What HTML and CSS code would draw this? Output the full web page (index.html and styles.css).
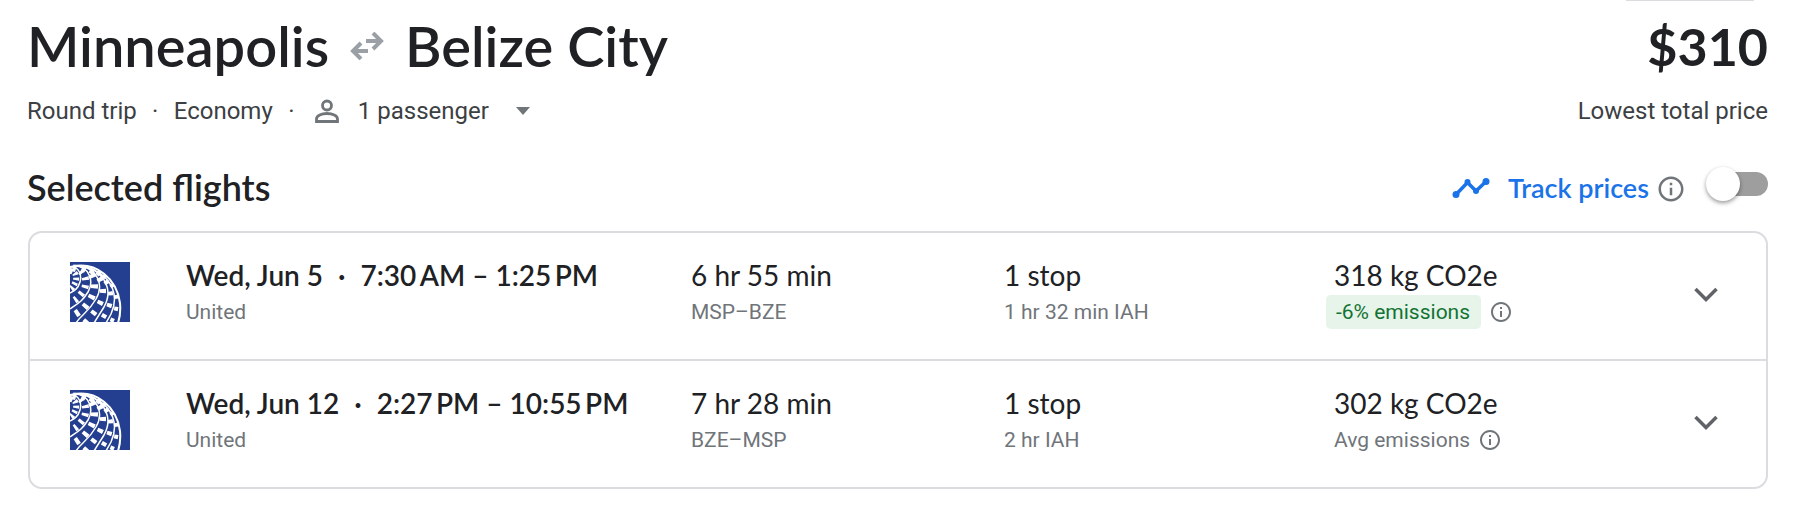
FILE: index.html
```html
<!DOCTYPE html>
<html lang="en">
<head>
<meta charset="utf-8">
<title>Minneapolis to Belize City</title>
<link rel="stylesheet" href="styles.css">
</head>
<body>
<svg class="symbols" aria-hidden="true">
  <symbol id="info" viewBox="0 0 24 24"><path d="M11 7h2v2h-2zm0 4h2v6h-2zm1-9C6.48 2 2 6.48 2 12s4.480 10 10 10 10-4.480 10-10S17.520 2 12 2zm0 18c-4.410 0-8-3.590-8-8s3.590-8 8-8 8 3.590 8 8-3.590 8-8 8z"/></symbol>
  <symbol id="chevron" viewBox="0 0 24 15"><path d="M1.500 2 12 12.500 22.500 2" fill="none" stroke="currentColor" stroke-width="3.500"/></symbol>
  <symbol id="globe" viewBox="0 0 60 60">
    <path fill="#243f8f" d="M0 0h60v60H0z"/>
    <g fill="none" stroke="#fff">
      <path stroke-width="6" stroke-dasharray="2.500 2.500" d="M0 9C7 9 7 17 5 21S2 26 0 27"/>
      <path stroke-width="7" stroke-dasharray="3 5" d="M3 6C18 8 18 24 12 31S4 39 0 40"/>
      <path stroke-width="7" stroke-dasharray="4 7" d="M12 6C27 11 27 27 20 38S8 50 0 56"/>
      <path stroke-width="6" stroke-dasharray="4 8" d="M20 8C36 17 35 33 29 43S19 56 14 62"/>
      <path stroke-width="5" stroke-dasharray="4 8" d="M27 10C43 22 43 38 37 49L30 61"/>
      <path stroke-width="4" stroke-dasharray="4 8" d="M33 13C48 26 49 42 44 54L41 61"/>
      <path stroke-width="1.500" d="M0 5C9 4 12 13 10 20S4 29 0 31M4 4C20 4 24 20 18 30S7 42 0 47M10 4C28 7 34 23 26 37S11 53 6 61M17 5C36 12 43 29 34 45L24 61M24 8C43 17 49 35 41 52L36 61"/>
      <path stroke-width="2" d="M0 5C27-2 47 18 50 41Q51 52 48 61"/>
    </g>
  </symbol>
</svg>
<main class="page">
  <div class="toolbar-edge"></div>
  <header class="trip">
    <div>
      <h1 class="route">Minneapolis
        <svg class="swap" viewBox="0 0 34 28" aria-label="to"><path d="M16 9h15M23 1l8 8-8 8M18 19H3M11 11l-8 8 8 8" fill="none" stroke="currentColor" stroke-width="4"/></svg>
        Belize City</h1>
      <div class="details">
        <span>Round trip</span><span class="dot">·</span><span>Economy</span><span class="dot">·</span>
        <button class="passengers" type="button">
          <svg class="person" viewBox="0 0 24 24"><g fill="none" stroke="currentColor" stroke-width="2.800"><circle cx="12" cy="6.500" r="4.500"/><path d="M1.500 22.500V20c0-3.500 5-5.500 10.500-5.500S22.500 16.500 22.500 20v2.500z"/></g></svg>
          <span>1 passenger</span>
          <svg class="caret" viewBox="0 0 14 8"><path d="M0 0h14L7 8z" fill="currentColor"/></svg>
        </button>
      </div>
    </div>
    <div class="total">
      <div class="price">$310</div>
      <div class="caption">Lowest total price</div>
    </div>
  </header>
  <section>
    <div class="bar">
      <h2 class="heading">Selected flights</h2>
      <div class="track">
        <svg class="trend" viewBox="0 0 38 22"><path d="M4 17.500 15.500 5.500 24 14 34 4.500" fill="none" stroke="currentColor" stroke-width="3.500"/><g fill="currentColor"><circle cx="4" cy="17.500" r="3.500"/><circle cx="15.500" cy="5" r="3"/><circle cx="24" cy="14" r="3"/><circle cx="34" cy="4.500" r="3.500"/></g></svg>
        <label class="track-label" for="track">Track prices</label>
        <button class="info info-large" type="button" aria-label="About price tracking"><svg><use href="#info"/></svg></button>
        <input class="switch" id="track" type="checkbox" role="switch">
      </div>
    </div>
    <ul class="flights">
      <li class="flight">
        <svg class="logo" role="img" aria-label="United"><use href="#globe"/></svg>
        <div><div class="main strong">Wed, Jun 5 <span class="sep">·</span> 7:30&thinsp;AM – 1:25&thinsp;PM</div><div class="sub">United</div></div>
        <div><div class="main">6 hr 55 min</div><div class="sub">MSP–BZE</div></div>
        <div><div class="main">1 stop</div><div class="sub">1 hr 32 min IAH</div></div>
        <div><div class="main">318 kg CO2e</div><div class="sub emissions"><span class="badge">-6% emissions</span><button class="info" type="button" aria-label="About emissions"><svg><use href="#info"/></svg></button></div></div>
        <button class="expand" type="button" aria-label="Flight details"><svg><use href="#chevron"/></svg></button>
      </li>
      <li class="flight">
        <svg class="logo" role="img" aria-label="United"><use href="#globe"/></svg>
        <div><div class="main strong">Wed, Jun 12 <span class="sep">·</span> 2:27&thinsp;PM – 10:55&thinsp;PM</div><div class="sub">United</div></div>
        <div><div class="main">7 hr 28 min</div><div class="sub">BZE–MSP</div></div>
        <div><div class="main">1 stop</div><div class="sub">2 hr IAH</div></div>
        <div><div class="main">302 kg CO2e</div><div class="sub emissions"><span>Avg emissions</span><button class="info" type="button" aria-label="About emissions"><svg><use href="#info"/></svg></button></div></div>
        <button class="expand" type="button" aria-label="Flight details"><svg><use href="#chevron"/></svg></button>
      </li>
    </ul>
  </section>
</main>
</body>
</html>
```
FILE: styles.css
```css
* { box-sizing: border-box; }
body { margin: 0; background: #fff; color: #202124; font-family: Roboto, "Liberation Sans", sans-serif; }
button { border: 0; padding: 0; background: none; color: inherit; font: inherit; cursor: pointer; }
svg { display: block; }
.symbols { position: absolute; width: 0; height: 0; }
.page { padding: 0 26px 0 27px; }

.toolbar-edge { height: 1px; width: 128px; margin: 0 14px 0 auto; background: #dadce0; }

.trip { display: flex; justify-content: space-between; padding-top: 13px; }
.route, .price { margin: 0; font: 600 56px/64px Lato, sans-serif; }
.route { display: flex; align-items: center; gap: 21px; }
.price { font-size: 52px; font-weight: 700; }
.swap { width: 34px; height: 28px; color: #9aa0a6; }
.details { display: flex; align-items: center; margin-top: 17px; }
.details, .caption { font-size: 24px; line-height: 32px; color: #3c4043; }
.dot { width: 37px; text-align: center; }
.passengers { display: flex; align-items: center; margin-left: 5px; }
.person { width: 24px; height: 24px; margin-right: 19px; color: #70757a; }
.caret { width: 14px; height: 8px; margin-left: 27px; color: #70757a; }
.total { text-align: right; }
.caption { margin-top: 17px; }

.bar { display: flex; align-items: center; justify-content: space-between; padding: 40px 0 24px; }
.heading { margin: 0; font: 600 36px/40px Lato, sans-serif; }
.track { display: flex; align-items: center; padding-top: 2px; }
.trend { width: 38px; height: 22px; margin-right: 18px; color: #1a73e8; }
.track-label { font: 600 27px/32px Lato, sans-serif; color: #1a73e8; }
.info { width: 24px; height: 24px; color: #70757a; }
.info svg { width: 100%; height: 100%; fill: currentColor; }
.info-large { width: 30px; height: 30px; margin: 2px 22px 0 7px; }
.switch {
  appearance: none; display: flex; align-items: center;
  width: 60px; height: 24px; margin: 0 0 8px; border-radius: 12px; background: #9e9e9e;
}
.switch::before {
  content: ""; width: 34px; height: 34px; margin-left: -2px; border-radius: 50%;
  background: #fff; box-shadow: 0 2px 4px rgba(0, 0, 0, .4);
}
.switch:checked { justify-content: flex-end; background: #8ab4f8; }

.flights { margin: 0 0 0 1px; padding: 0; list-style: none; border: 2px solid #dadce0; border-radius: 14px; }
.flight {
  display: grid; grid-template-columns: 116px 505fr 313fr 330fr 360fr 24px;
  align-items: start; height: 126px; padding: 26px 48px 0 40px;
}
.flight + .flight { height: 128px; border-top: 2px solid #dadce0; }
.logo { width: 60px; height: 60px; margin-top: 3px; }
.main { margin-bottom: 3px; font: 400 28px/33px Lato, sans-serif; white-space: nowrap; }
.strong { font-weight: 600; }
.sep { margin: 0 8px; }
.sub { display: flex; align-items: center; height: 34px; font-size: 21px; color: #70757a; white-space: nowrap; }
.emissions { gap: 8px; }
.badge { margin-left: -8px; padding: 0 11px 0 10px; border-radius: 5px; background: #e6f4ea; color: #137333; line-height: 34px; }
.expand { margin-top: 28px; color: #5f6368; }
.expand svg { width: 24px; height: 15px; }
```
